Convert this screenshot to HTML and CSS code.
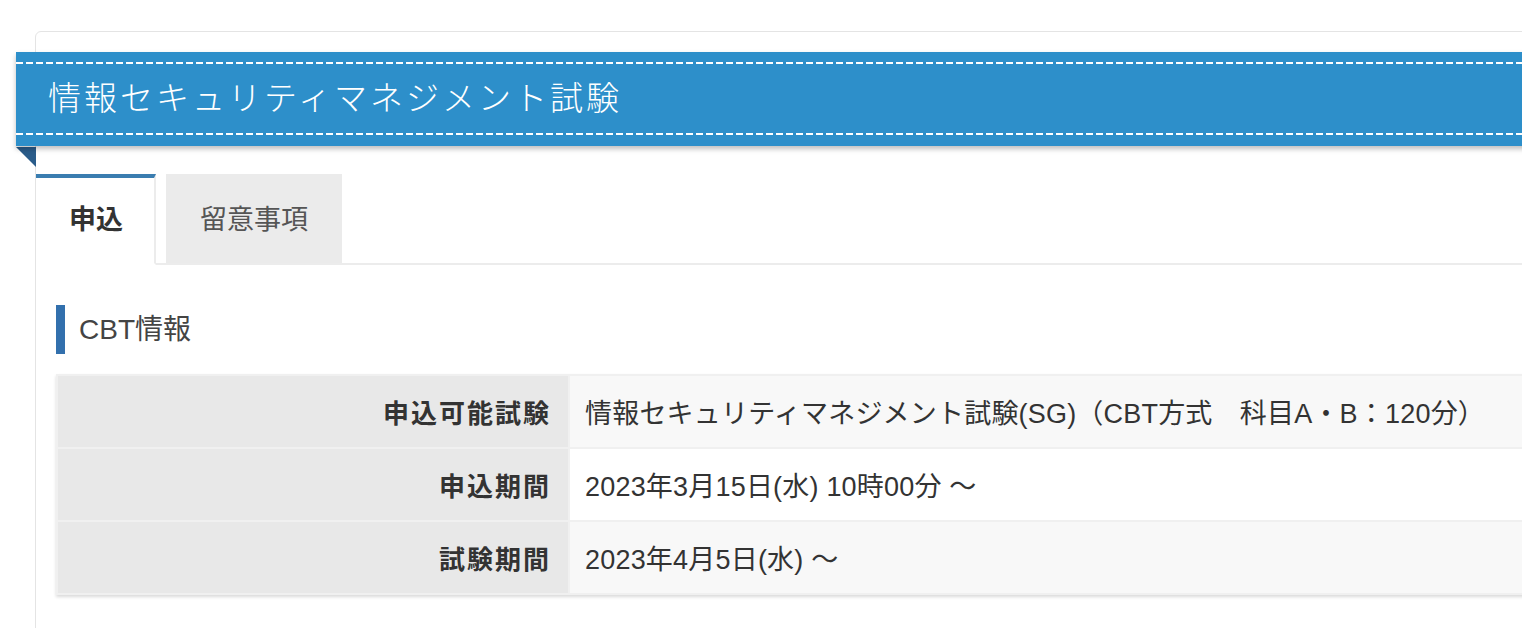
FILE: index.html
```html
<!DOCTYPE html>
<html lang="ja">
<head>
    <meta charset="UTF-8">
    <meta name="viewport" content="width=device-width, initial-scale=1.0">
    <title>情報セキュリティマネジメント試験</title>
    <link rel="stylesheet" href="styles.css">
</head>
<body>
    <div class="page">
        <div class="card">
            <div class="banner">
                <h1 class="banner-title">情報セキュリティマネジメント試験</h1>
            </div>

            <ul class="tabs">
                <li class="tab active">申込</li>
                <li class="tab">留意事項</li>
            </ul>

            <div class="tab-body">
                <h2 class="section-title">CBT情報</h2>
                <table class="info-table">
                    <tr>
                        <th>申込可能試験</th>
                        <td>情報セキュリティマネジメント試験(SG)（CBT方式　科目A・B：120分）</td>
                    </tr>
                    <tr>
                        <th>申込期間</th>
                        <td>2023年3月15日(水) 10時00分 ～</td>
                    </tr>
                    <tr>
                        <th>試験期間</th>
                        <td>2023年4月5日(水) ～</td>
                    </tr>
                </table>
            </div>
        </div>
    </div>
</body>
</html>
```

FILE: styles.css
```css
html, body {
    margin: 0;
    overflow: hidden;
    background-color: #ffffff;
}
body {
    font-family: "Liberation Sans", "Noto Sans CJK JP", sans-serif;
    color: #333;
}
.page {
    padding: 31px 0 0 35px;
}
.card {
    position: relative;
    margin-right: -40px;
    min-height: 700px;
    border: 1px solid #e4e4e4;
    border-radius: 6px 0 0 0;
}
/* folded corner under the ribbon */
.card::before {
    content: "";
    position: absolute;
    left: -20px;
    top: 115px;
    border-top: 20px solid #2a5c8a;
    border-left: 20px solid transparent;
}

/* blue ribbon with stitched edges */
.banner {
    position: relative;
    height: 94px;
    margin: 20px -40px 0 -20px;
    background-color: #2d8fca;
    box-shadow: 0 3px 5px rgba(0, 0, 0, 0.25);
}
.banner::before,
.banner::after {
    content: "";
    position: absolute;
    left: 0;
    right: 0;
    height: 2px;
    background: repeating-linear-gradient(to right, #ffffff 0 7px, transparent 7px 10px);
}
.banner::before {
    top: 10px;
}
.banner::after {
    bottom: 11px;
}
.banner-title {
    margin: 0;
    padding-left: 32px;
    line-height: 94px;
    font-size: 33px;
    font-weight: 300;
    letter-spacing: 3px;
    color: #ffffff;
}

.tabs {
    display: flex;
    gap: 10px;
    margin: 28px 0 0;
    padding: 0;
    list-style: none;
    border-bottom: 2px solid #ececec;
}
.tab {
    height: 85px;
    margin-bottom: -2px;
    padding: 0 34px;
    border-top: 4px solid transparent;
    background-color: #ebebeb;
    font-size: 27px;
    line-height: 85px;
    color: #555;
}
.tab.active {
    padding: 0 31px 0 33px;
    border-top-color: #3a7db0;
    border-right: 2px solid #ececec;
    border-bottom: 2px solid #ffffff;
    background-color: #ffffff;
    font-weight: bold;
    color: #333;
}

.tab-body {
    padding: 40px 0 0 20px;
}
.section-title {
    margin: 0;
    height: 49px;
    padding-left: 14px;
    border-left: 9px solid #3270ad;
    font-size: 28px;
    font-weight: normal;
    line-height: 50px;
    color: #444;
}

.info-table {
    width: 100%;
    margin-top: 20px;
    border-collapse: collapse;
    box-shadow: 0 2px 3px rgba(0, 0, 0, 0.15);
}
.info-table th,
.info-table td {
    height: 71px;
    padding: 0 17px;
    border: 2px solid #f0f0f0;
    font-size: 27px;
}
.info-table th {
    width: 476px;
    text-align: right;
    background-color: #e8e8e8;
    font-size: 26px;
    letter-spacing: 2px;
    color: #333;
}
.info-table td {
    padding-left: 15px;
    background-color: #ffffff;
    letter-spacing: 0.2px;
    color: #333;
}
.info-table tr:nth-child(odd) td {
    background-color: #f8f8f8;
}
```
